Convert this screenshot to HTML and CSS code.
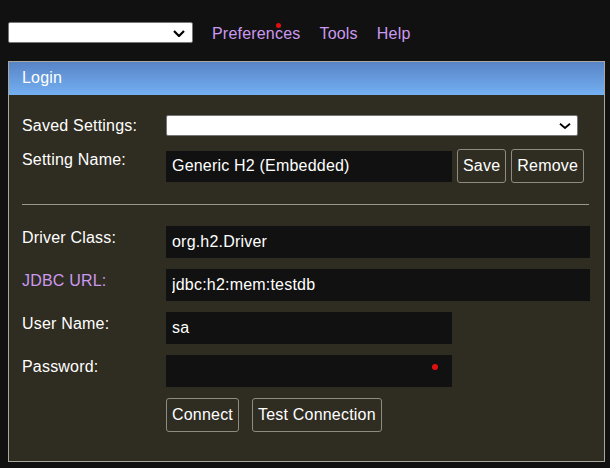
FILE: index.html
```html
<!DOCTYPE html>
<html lang="en">
<head>
<meta charset="utf-8">
<title>H2 Console Login</title>
<link rel="stylesheet" href="styles.css">
</head>
<body>
  <div class="toolbar">
    <div class="select-wrap lang">
      <select class="select" aria-label="Language"><option></option></select>
      <svg class="chevron" width="12" height="7" viewBox="0 0 12 7"><polyline points="1,1 6,6 11,1" fill="none" stroke="#000" stroke-width="2.2"/></svg>
    </div>
    <a class="link dotted" href="#">Preferences<span class="dot top-dot"></span></a>
    <a class="link" href="#">Tools</a>
    <a class="link" href="#">Help</a>
  </div>

  <div class="panel">
    <div class="panel-head">Login</div>
    <div class="panel-body">
      <div class="row row-saved">
        <label class="label">Saved Settings:</label>
        <div class="select-wrap saved">
          <select class="select" aria-label="Saved Settings"><option></option></select>
          <svg class="chevron" width="12" height="6" viewBox="0 0 12 6"><polyline points="1,0.8 6,5 11,0.8" fill="none" stroke="#000" stroke-width="1.8"/></svg>
        </div>
      </div>
      <div class="row row-name">
        <label class="label">Setting Name:</label>
        <input class="input short name" type="text" value="Generic H2 (Embedded)">
        <button class="btn">Save</button>
        <button class="btn">Remove</button>
      </div>
      <hr class="sep">
      <div class="row">
        <label class="label pad">Driver Class:</label>
        <input class="input wide" type="text" value="org.h2.Driver">
      </div>
      <div class="row">
        <a class="label pad jdbc" href="#">JDBC URL:</a>
        <input class="input wide" type="text" value="jdbc:h2:mem:testdb">
      </div>
      <div class="row">
        <label class="label pad">User Name:</label>
        <input class="input short" type="text" value="sa">
      </div>
      <div class="row">
        <label class="label pad">Password:</label>
        <div class="field">
          <input class="input short" type="password" value="">
          <span class="dot pw-dot"></span>
        </div>
      </div>
      <div class="row row-buttons">
        <button class="btn">Connect</button>
        <button class="btn">Test Connection</button>
      </div>
    </div>
  </div>
</body>
</html>
```

FILE: styles.css
```css
* { box-sizing: border-box; }

html, body {
  margin: 0;
  padding: 0;
  background: #111111;
}

body {
  font-family: "Liberation Sans", Arial, sans-serif;
  font-size: 16px;
  letter-spacing: 0.2px;
  color: #ffffff;
}

.toolbar {
  display: flex;
  align-items: center;
  gap: 19px;
  padding: 22px 8px 0 8px;
  height: 43px;
}

.select-wrap {
  position: relative;
}

.select {
  -webkit-appearance: none;
  appearance: none;
  display: block;
  width: 100%;
  height: 100%;
  margin: 0;
  background: #ffffff;
  border: 1px solid #767676;
  border-radius: 2px;
  font: inherit;
  color: #000;
}

.lang {
  width: 185px;
  height: 21px;
}

.lang .chevron {
  position: absolute;
  right: 8px;
  top: 8px;
}

.saved {
  width: 412px;
  height: 21px;
}

.saved .chevron {
  position: absolute;
  right: 7px;
  top: 8px;
}

.link {
  position: relative;
  color: #cc99f0;
  text-decoration: none;
  padding-top: 2px;
}

.dot {
  position: absolute;
  width: 6px;
  height: 6px;
  border-radius: 50%;
  background: #e01010;
}

.top-dot {
  left: 64px;
  top: 0;
  width: 5px;
  height: 5px;
}

.panel {
  margin: 18px 0 0 8px;
  width: 597px;
  border: 1px solid #aaa89d;
}

.panel-head {
  height: 33px;
  padding: 7px 13px 0;
  background: linear-gradient(to bottom, #5884c6, #73b0f2);
  color: #ffffff;
}

.panel-body {
  background: #2f2c21;
  padding: 20px 14px 29px 13px;
  display: flex;
  flex-direction: column;
}

.row {
  display: flex;
  align-items: flex-start;
  margin-bottom: 11px;
}

.row-saved {
  margin-bottom: 13px;
}

.row-name {
  align-items: center;
  gap: 5px;
  margin-bottom: 0;
}

.label {
  width: 144px;
  flex: none;
  color: #ffffff;
  text-decoration: none;
  padding-top: 2px;
}

.row-name .label {
  align-self: flex-start;
  margin-right: -5px;
}

.label.pad {
  padding-top: 3px;
}

.jdbc {
  color: #cc99f0;
}

.input {
  height: 32px;
  border: none;
  outline: none;
  background: #111111;
  color: #ffffff;
  font: inherit;
  letter-spacing: inherit;
  padding: 0 6px;
  margin: 0;
}

.input.wide { width: 424px; }
.input.short { width: 286px; }
.input.name { height: 31px; }

.field {
  position: relative;
  display: flex;
}

.pw-dot {
  left: 266px;
  top: 9px;
}

.btn {
  height: 34px;
  padding: 0 5px;
  background: transparent;
  border: 1px solid #8d8b82;
  border-radius: 3px;
  color: #ffffff;
  font: inherit;
  letter-spacing: inherit;
  margin: 0;
}

.sep {
  margin: 21px 1px 21px 0;
  border: none;
  border-top: 1px solid #9a988f;
  height: 0;
}

.row-buttons {
  padding-left: 144px;
  gap: 13px;
  margin-bottom: 0;
}
```
